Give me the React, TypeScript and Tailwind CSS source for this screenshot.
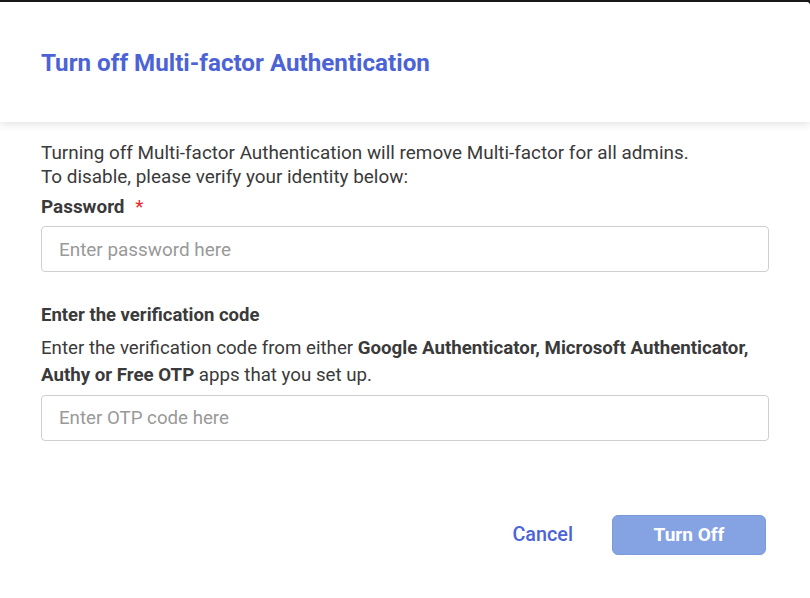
import React from "react";

export default function App() {
  return (
    <div className="w-[810px] h-[598px] bg-[#1a1a1a] pt-[2px] overflow-hidden" style={{ fontFamily: "Roboto, 'Liberation Sans', sans-serif" }}>
      <div className="bg-white h-[596px] rounded-tr-[4px] flex flex-col">
        <div className="h-[120px] shrink-0 flex items-center pl-[41px] pt-[2px] shadow-[0_2px_8px_rgba(0,0,0,0.12)] relative z-10 bg-white rounded-tr-[4px]">
          <h1 className="text-[24.2px] font-bold text-[#4c63d6] leading-none">Turn off Multi-factor Authentication</h1>
        </div>
        <div className="px-[41px] pt-[19px] text-[18.9px] text-[#3a3a3a]">
          <p className="leading-[24px]">Turning off Multi-factor Authentication will remove Multi-factor for all admins.</p>
          <p className="leading-[24px]">To disable, please verify your identity below:</p>
          <div className="leading-[30px] font-bold mt-[3px]">
            Password <span className="text-[#e8262b] font-normal ml-[6px]">*</span>
          </div>
          <input
            className="mt-[4px] w-[728px] h-[46px] border border-[#cfcfcf] rounded-[4px] px-[17px] text-[18.9px] placeholder:text-[#999999] outline-none"
            placeholder="Enter password here"
          />
          <div className="mt-[31px] font-bold leading-[24px] text-[18.5px]">Enter the verification code</div>
          <p className="mt-[8px] leading-[27px] text-[18.7px]">
            Enter the verification code from either <b className="font-bold">Google Authenticator, Microsoft Authenticator, Authy or Free OTP</b> apps that you set up.
          </p>
          <input
            className="mt-[6px] w-[728px] h-[46px] border border-[#cfcfcf] rounded-[4px] px-[17px] text-[18.7px] placeholder:text-[#999999] outline-none"
            placeholder="Enter OTP code here"
          />
          <div className="flex justify-end items-center mt-[74px] w-[725px]">
            <button className="text-[19.8px] font-medium text-[#4c63d6] mr-[39px]">Cancel</button>
            <button className="w-[154px] h-[40px] rounded-[6px] bg-[#85a3e3] text-white text-[19px] font-bold border border-[#7a9ad9]">Turn Off</button>
          </div>
        </div>
      </div>
    </div>
  );
}
